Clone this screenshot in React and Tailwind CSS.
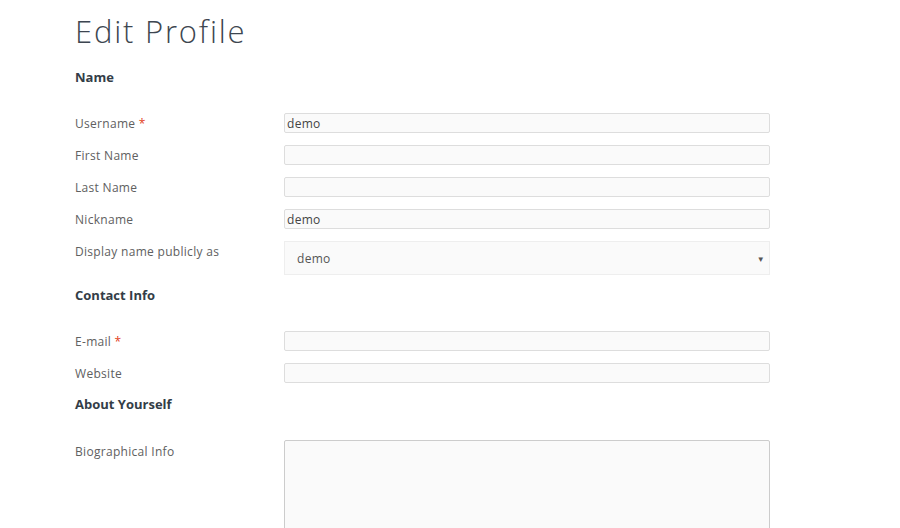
export default function App() {
  const font = { fontFamily: '"Open Sans", "Noto Sans", sans-serif' };
  const Row = ({ label, req, value, className = "" }) => (
    <div className={"flex items-start " + className}>
      <div className="w-[209px] h-[20px] pt-[1px] text-[12px] leading-[20px] tracking-[0.3px] text-[#606060]">
        {label}
        {req && <span className="text-[#e2401c]"> *</span>}
      </div>
      <div className="w-[486px] h-[20px] border border-[#ddd] bg-[#fafafa] rounded-[2px] px-[2px] pt-[1px] text-[12px] leading-[18px] tracking-[0.3px] text-[#444]">
        {value}
      </div>
    </div>
  );
  return (
    <div className="bg-white min-h-[528px] h-[528px] overflow-hidden pl-[75px]" style={font}>
      <h1 className="mt-[11px] text-[31px] leading-[40px] font-light tracking-[1.8px] text-[#3d4650]">Edit Profile</h1>
      <h2 className="mt-[16px] text-[13px] leading-[20px] font-bold text-[#333d47]">Name</h2>
      <Row label="Username" req value="demo" className="mt-[26px]" />
      <Row label="First Name" className="mt-[12px]" />
      <Row label="Last Name" className="mt-[12px]" />
      <Row label="Nickname" value="demo" className="mt-[12px]" />
      <div className="flex items-start mt-[12px]">
        <div className="w-[209px] h-[20px] pt-[1px] text-[12px] leading-[20px] tracking-[0.3px] text-[#606060]">Display name publicly as</div>
        <div className="w-[486px] h-[34px] border border-[#eee] bg-[#fafafa] flex items-center justify-between pl-[12px] pr-[4px] pt-[1px] text-[12px] tracking-[0.3px] text-[#555]">
          <span>demo</span>
          <span className="text-[8px] text-[#555]">▼</span>
        </div>
      </div>
      <h2 className="mt-[10px] text-[13px] leading-[20px] font-bold text-[#333d47]">Contact Info</h2>
      <Row label="E-mail" req className="mt-[26px]" />
      <Row label="Website" className="mt-[12px]" />
      <h2 className="mt-[11px] text-[13px] leading-[20px] font-bold text-[#333d47]">About Yourself</h2>
      <div className="flex items-start mt-[26px]">
        <div className="w-[209px] h-[20px] pt-[2px] text-[12px] leading-[20px] tracking-[0.3px] text-[#606060]">Biographical Info</div>
        <div className="w-[486px] h-[140px] border border-[#ccc] bg-[#fafafa] rounded-[2px]"></div>
      </div>
    </div>
  );
}
